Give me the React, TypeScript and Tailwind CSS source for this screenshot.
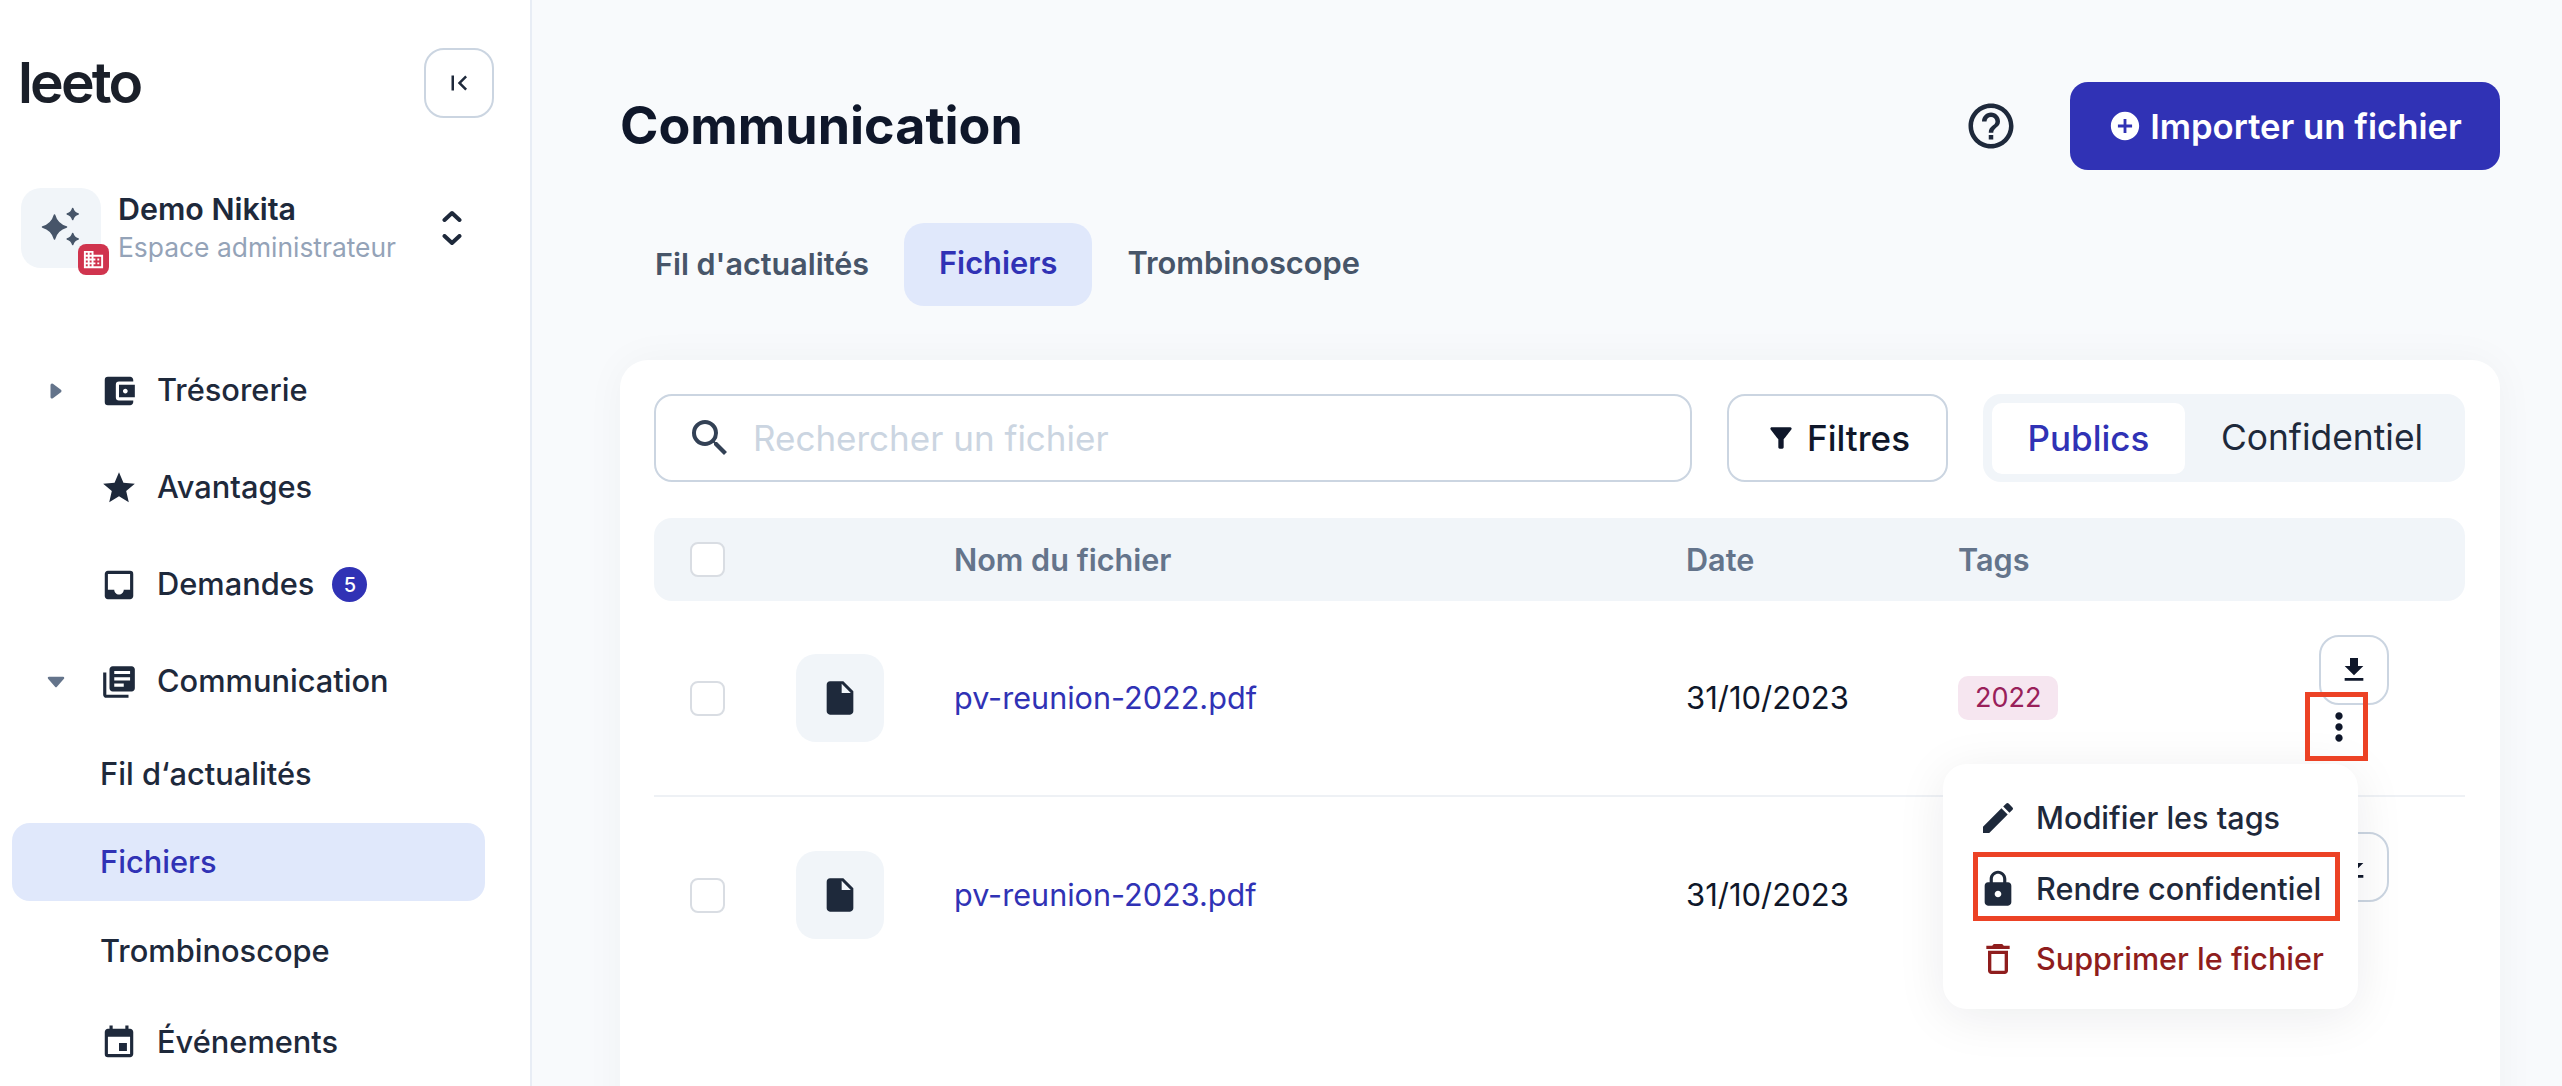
import React from "react";
import {
  MdAccountBalanceWallet, MdStar, MdInbox, MdLibraryBooks, MdEvent, MdInsertDriveFile, MdEdit, MdLock,
  MdDeleteOutline, MdFileDownload, MdMoreVert, MdHelpOutline, MdAddCircle, MdSearch, MdFilterAlt,
  MdDomain, MdFirstPage,
} from "react-icons/md";

const font = { fontFamily: "Inter, 'Liberation Sans', sans-serif" };

function star(cx: number, cy: number, r: number) {
  const k = r * 0.22;
  return `M${cx} ${cy - r}Q${cx + k} ${cy - k} ${cx + r} ${cy}Q${cx + k} ${cy + k} ${cx} ${cy + r}Q${cx - k} ${cy + k} ${cx - r} ${cy}Q${cx - k} ${cy - k} ${cx} ${cy - r}Z`;
}

function Sparkles() {
  return (
    <svg width="80" height="80" viewBox="0 0 80 80" fill="#475569" stroke="#475569" strokeWidth="1.5" strokeLinejoin="round">
      <path d={star(33.5, 39, 12)} />
      <path d={star(51.7, 26, 5.5)} />
      <path d={star(51.7, 51, 5.5)} />
    </svg>
  );
}

function Caret({ dir }: { dir: "right" | "down" }) {
  return dir === "right" ? (
    <svg width="14" height="18" viewBox="0 0 14 18" fill="#64748b" stroke="#64748b" strokeWidth="3" strokeLinejoin="round" className="ml-[2px]">
      <path d="M3 3L11 9L3 15Z" />
    </svg>
  ) : (
    <svg width="18" height="12" viewBox="0 0 18 12" fill="#64748b" stroke="#64748b" strokeWidth="2.5" strokeLinejoin="round">
      <path d="M2 2H16L9 10Z" />
    </svg>
  );
}

function NavRow({ icon, label, caret, badge, h }: { icon: React.ReactNode; label: string; caret?: "right" | "down"; badge?: string; h: string }) {
  return (
    <div className={`flex items-center ${h}`}>
      <div className="w-[100px] flex justify-start pl-[47px]">{caret && <Caret dir={caret} />}</div>
      <div className="w-[57px] text-[#1e293b]">{icon}</div>
      <span className="text-[30.8px] font-medium text-[#1e293b]">{label}</span>
      {badge && (
        <span className="ml-[18px] w-[35px] h-[35px] rounded-full bg-[#3032b5] text-white text-[20px] font-medium flex items-center justify-center">{badge}</span>
      )}
    </div>
  );
}

function Sidebar() {
  return (
    <aside className="w-[532px] shrink-0 bg-white border-r-2 border-[#e8edf5] h-full flex flex-col">
      <div className="flex items-center justify-between pl-[18px] pr-[36px] pt-[47px]">
        <span className="text-[57px] leading-[72px] font-semibold tracking-[-0.05em] text-[#1a1f29]">leeto</span>
        <button className="w-[70px] h-[70px] rounded-[20px] border-2 border-[#cbd5e1] flex items-center justify-center text-[#1e293b]">
          <MdFirstPage size={30} />
        </button>
      </div>
      <div className="flex items-center pl-[21px] pt-[69px]">
        <div className="relative w-[80px] h-[80px] rounded-[20px] bg-[#f1f5f9]">
          <Sparkles />
          <span className="absolute -right-[8px] -bottom-[7px] w-[31px] h-[31px] rounded-[8px] bg-[#d0344e] text-white flex items-center justify-center">
            <MdDomain size={23} />
          </span>
        </div>
        <div className="ml-[17px] w-[324px]">
          <div className="text-[30.4px] leading-[38px] font-semibold text-[#1e293b]">Demo Nikita</div>
          <div className="text-[26.4px] leading-[38px] text-[#94a3b8]">Espace administrateur</div>
        </div>
        <div className="flex flex-col items-center gap-[12px]">
          <svg width="20" height="12" viewBox="0 0 20 12" fill="none" stroke="#1e293b" strokeWidth="4" strokeLinecap="round" strokeLinejoin="round"><path d="M2.5 10L10 3L17.5 10" /></svg>
          <svg width="20" height="12" viewBox="0 0 20 12" fill="none" stroke="#1e293b" strokeWidth="4" strokeLinecap="round" strokeLinejoin="round"><path d="M2.5 2L10 9L17.5 2" /></svg>
        </div>
      </div>
      <nav className="pt-[74px]">
        <NavRow h="h-[97px]" caret="right" label="Trésorerie" icon={<MdAccountBalanceWallet size={38} />} />
        <NavRow h="h-[97px]" label="Avantages" icon={<MdStar size={38} />} />
        <NavRow h="h-[97px]" label="Demandes" badge="5" icon={<MdInbox size={38} />} />
        <NavRow h="h-[97px]" caret="down" label="Communication" icon={<MdLibraryBooks size={38} />} />
        <div className="h-[88px] flex items-center pl-[100px] text-[30.8px] font-medium text-[#1e293b]">Fil d‘actualités</div>
        <div className="h-[78px] mx-[12px] w-[473px] my-[5px] rounded-[18px] bg-[#e0e8fb] flex items-center pl-[88px] text-[30.8px] font-medium text-[#3032b5]">Fichiers</div>
        <div className="h-[90px] flex items-center pl-[100px] text-[30.8px] font-medium text-[#1e293b]">Trombinoscope</div>
        <NavRow h="h-[93px]" label="Événements" icon={<MdEvent size={38} />} />
      </nav>
    </aside>
  );
}

function Checkbox() {
  return <span className="block w-[35px] h-[35px] rounded-[8px] border-2 border-[#d9dde3] bg-white" />;
}

const cols = "grid grid-cols-[106px_158px_732px_272px_1fr] items-center";

function Row({ name, tag, last }: { name: string; tag?: string; last?: boolean }) {
  return (
    <div className={`${cols} h-[196px] pl-[36px] ${last ? "" : "border-b-2 border-[#eef1f5]"}`}>
      <Checkbox />
      <div className="w-[88px] h-[88px] rounded-[20px] bg-[#f1f5f9] flex items-center justify-center text-[#1e293b]">
        <MdInsertDriveFile size={40} />
      </div>
      <span className="text-[30.6px] text-[#3032b5]">{name}</span>
      <span className="text-[31px] text-[#0f172a]">31/10/2023</span>
      <div className="flex items-center justify-between">
        {tag ? <span className="px-[17px] h-[44px] flex items-center rounded-[10px] bg-[#f6e6f0] text-[#99205a] text-[27px]">{tag}</span> : <span />}
        <div className="flex flex-col items-center mr-[76px] relative -top-[6px]">
          <button className="w-[70px] h-[70px] rounded-[20px] border-2 border-[#cbd5e1] bg-white flex items-center justify-center text-[#0f172a]">
            <MdFileDownload size={32} />
          </button>
          <MdMoreVert size={44} className="text-[#0f172a] -translate-x-[15px]" />
        </div>
      </div>
    </div>
  );
}

function MenuItem({ icon, label, color }: { icon: React.ReactNode; label: string; color: string }) {
  return (
    <div className={`h-[70.5px] flex items-center gap-[18px] ${color}`}>
      {icon}
      <span className="text-[30.6px] font-medium whitespace-nowrap">{label}</span>
    </div>
  );
}

export default function App() {
  return (
    <div style={font} className="h-[1086px] w-[2562px] overflow-hidden flex bg-[#f8fafc]">
      <Sidebar />
      <main className="flex-1 pl-[88px] pr-[62px] relative">
        <header className="flex items-center pt-[82px] h-[170px]">
          <h1 className="text-[52px] font-bold text-[#0f172a] flex-1">Communication</h1>
          <MdHelpOutline size={54} className="text-[#1e293b] mr-[52px]" />
          <button className="w-[430px] h-[88px] rounded-[18px] bg-[#3032b5] text-white flex items-center justify-center gap-[8px] text-[34.7px] font-semibold">
            <MdAddCircle size={34} />
            Importer un fichier
          </button>
        </header>
        <div className="flex items-center mt-[53px]">
          <span className="px-[35px] h-[83px] flex items-center pb-[2px] text-[30.5px] font-semibold text-[#475569]">Fil d'actualités</span>
          <span className="px-[35px] h-[83px] flex items-center pb-[2px] rounded-[20px] bg-[#e0e8fb] text-[30.8px] font-semibold text-[#3032b5]">Fichiers</span>
          <span className="px-[35px] h-[83px] flex items-center pb-[2px] text-[30.8px] font-semibold text-[#475569]">Trombinoscope</span>
        </div>
        <section className="mt-[54px] bg-white rounded-[28px] shadow-[0_0_40px_rgba(15,23,42,0.04)] pl-[34px] pr-[35px] pt-[34px] h-[800px]">
          <div className="flex items-center gap-[35px]">
            <div className="flex-1 h-[88px] rounded-[18px] border-2 border-[#cbd5e1] flex items-center pl-[30px] gap-[19px]">
              <MdSearch size={48} className="text-[#334155]" />
              <span className="text-[35px] text-[#cbd5e1]">Rechercher un fichier</span>
            </div>
            <button className="w-[221px] h-[88px] rounded-[18px] border-2 border-[#cbd5e1] flex items-center justify-center gap-[10px] text-[35px] font-medium text-[#0f172a]">
              <MdFilterAlt size={32} />
              Filtres
            </button>
            <div className="w-[482px] h-[88px] rounded-[18px] bg-[#f1f5f9] flex items-center pl-[9px]">
              <span className="w-[193px] h-[71px] rounded-[10px] bg-white flex items-center justify-center text-[35px] font-medium text-[#3032b5]">Publics</span>
              <span className="flex-1 text-center pr-[6px] text-[35.4px] text-[#1e293b]">Confidentiel</span>
            </div>
          </div>
          <div className={`${cols} h-[83px] mt-[36px] pl-[36px] rounded-[18px] bg-[#f1f5f9] text-[30.6px] font-semibold text-[#64748b]`}>
            <Checkbox />
            <span />
            <span>Nom du fichier</span>
            <span>Date</span>
            <span>Tags</span>
          </div>
          <Row name="pv-reunion-2022.pdf" tag="2022" />
          <Row name="pv-reunion-2023.pdf" last />
        </section>

        <div className="absolute left-[1411px] top-[764px] w-[415px] h-[245px] rounded-[24px] bg-white shadow-[0_8px_50px_rgba(15,23,42,0.08)] pl-[35px] pt-[19px]">
          <MenuItem color="text-[#1e293b]" label="Modifier les tags" icon={<MdEdit size={40} />} />
          <MenuItem color="text-[#1e293b]" label="Rendre confidentiel" icon={<MdLock size={40} />} />
          <MenuItem color="text-[#8f1d1d]" label="Supprimer le fichier" icon={<MdDeleteOutline size={40} />} />
        </div>
        <div className="absolute left-[1441px] top-[852px] w-[367px] h-[69px] border-[5px] border-[#ec4225]" />
        <div className="absolute left-[1773px] top-[692px] w-[63px] h-[69px] border-[5px] border-[#ec4225]" />
      </main>
    </div>
  );
}
